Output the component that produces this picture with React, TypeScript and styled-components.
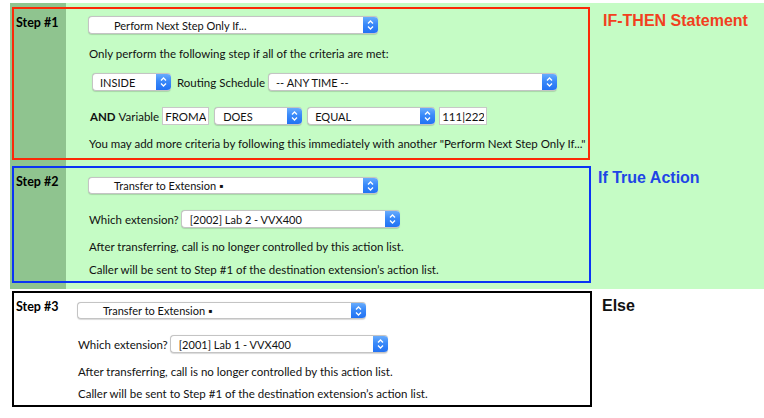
import React from "react";
import styled, { createGlobalStyle } from "styled-components";

const GlobalStyle = createGlobalStyle`
  html, body { margin: 0; padding: 0; background: #ffffff; }
  body { font-family: Lato, "Open Sans", "Noto Sans", sans-serif; color: #111; }
`;

const Page = styled.div`
  width: 764px;
  height: 418px;
  overflow: hidden;
  padding-top: 3px;
  box-sizing: border-box;
`;

const GreenSection = styled.div`
  margin-left: 10px;
  padding: 4px 0 6px 2px;
  background: linear-gradient(to right, #8fc48f 0, #8fc48f 56px, #c5fcc5 56px);
`;

const WhiteSection = styled.div`
  margin-left: 10px;
  padding: 2px 0 0 2px;
`;

const Row = styled.div<{ $mt?: number }>`
  display: flex;
  align-items: flex-start;
  margin-top: ${(p) => p.$mt ?? 0}px;
`;

const StepBox = styled.div<{ $color: string; $w: number }>`
  box-sizing: border-box;
  width: ${(p) => p.$w}px;
  border: 2px solid ${(p) => p.$color};
  display: flex;
  align-items: flex-start;
`;

const StepLabel = styled.div<{ $w: number }>`
  box-sizing: border-box;
  width: ${(p) => p.$w}px;
  flex: none;
  padding: 6px 0 0 2px;
  font-size: 12.5px;
  line-height: 16px;
  font-weight: 700;
  color: #000;
`;

const StepBody = styled.div<{ $pt: number; $pb: number }>`
  flex: 1;
  display: flex;
  flex-direction: column;
  align-items: flex-start;
  padding: ${(p) => p.$pt}px 0 ${(p) => p.$pb}px 0;
`;

const SideLabel = styled.div<{ $color: string; $ml: number; $mt: number }>`
  font-family: "Liberation Sans", Arial, sans-serif;
  font-weight: 700;
  font-size: 16px;
  line-height: 18px;
  color: ${(p) => p.$color};
  margin-left: ${(p) => p.$ml}px;
  margin-top: ${(p) => p.$mt}px;
  white-space: nowrap;
`;

const Text = styled.p<{ $mt: number }>`
  margin: ${(p) => p.$mt}px 0 0 1px;
  font-size: 11.5px;
  line-height: 16px;
  white-space: nowrap;
  color: #111;
`;

const Line = styled.div<{ $mt: number; $pl?: number; $h: number }>`
  display: flex;
  align-items: center;
  height: ${(p) => p.$h}px;
  margin-top: ${(p) => p.$mt}px;
  padding-left: ${(p) => p.$pl ?? 0}px;
  font-size: 11.5px;
  white-space: nowrap;
`;

const Word = styled.span<{ $ml?: number; $bold?: boolean }>`
  margin-left: ${(p) => p.$ml ?? 0}px;
  font-weight: ${(p) => (p.$bold ? 700 : 400)};
  color: #111;
`;

const SelectShell = styled.div<{ $w: number; $h: number; $ml?: number }>`
  box-sizing: border-box;
  flex: none;
  width: ${(p) => p.$w}px;
  height: ${(p) => p.$h}px;
  margin-left: ${(p) => p.$ml ?? 0}px;
  display: flex;
  align-items: stretch;
  background: #ffffff;
  border: 1px solid #c4c4c4;
  border-right: none;
  border-radius: 4px;
  box-shadow: 0 0.5px 1px rgba(0, 0, 0, 0.15);
  overflow: hidden;
`;

const SelectText = styled.span<{ $indent: number }>`
  flex: 1;
  display: flex;
  align-items: center;
  padding-left: ${(p) => p.$indent}px;
  font-size: 11px;
  color: #111;
  white-space: nowrap;
  overflow: hidden;
`;

const ArrowButton = styled.span`
  flex: none;
  width: 15px;
  margin: -1px 0;
  display: flex;
  align-items: center;
  justify-content: center;
  background: linear-gradient(to bottom, #6fb1fd 0%, #3a8af9 45%, #1f6ff3 100%);
  border-radius: 0 4px 4px 0;
`;

const FieldInput = styled.input<{ $w: number; $ml?: number }>`
  box-sizing: border-box;
  flex: none;
  width: ${(p) => p.$w}px;
  height: 18px;
  margin: 0 0 0 ${(p) => p.$ml ?? 0}px;
  padding: 0 2px;
  border: 1px solid #c8c8c8;
  background: #ffffff;
  font-family: Lato, "Open Sans", sans-serif;
  font-size: 11.5px;
  color: #111;
  outline: none;
`;

const Chevrons = () => (
  <svg width="9" height="12" viewBox="0 0 9 12" fill="none">
    <polyline points="2,4.5 4.5,2 7,4.5" stroke="#ffffff" strokeWidth="1.3" />
    <polyline points="2,7.5 4.5,10 7,7.5" stroke="#ffffff" strokeWidth="1.3" />
  </svg>
);

type SelectProps = {
  w: number;
  h?: number;
  indent?: number;
  ml?: number;
  children: React.ReactNode;
};

const Select = ({ w, h = 18, indent = 7, ml, children }: SelectProps) => (
  <SelectShell $w={w} $h={h} $ml={ml}>
    <SelectText $indent={indent}>{children}</SelectText>
    <ArrowButton>
      <Chevrons />
    </ArrowButton>
  </SelectShell>
);

type TransferProps = {
  selW: number;
  extW: number;
  ext: string;
  textGap: number;
};

const TransferBody = ({ selW, extW, ext, textGap }: TransferProps) => (
  <StepBody $pt={9} $pb={3}>
    <Select w={selW} h={17} indent={25}>
      Transfer to Extension ▪
    </Select>
    <Line $mt={16} $h={18}>
      <Word $ml={1}>Which extension?</Word>
      <Select w={extW} indent={8} ml={2}>
        {ext}
      </Select>
    </Line>
    <Text $mt={11}>After transferring, call is no longer controlled by this action list.</Text>
    <Text $mt={textGap}>Caller will be sent to Step #1 of the destination extension’s action list.</Text>
  </StepBody>
);

export default function App() {
  return (
    <Page>
      <GlobalStyle />
      <GreenSection>
        <Row>
          <StepBox $color="#fb2a08" $w={578}>
            <StepLabel $w={74}>Step #1</StepLabel>
            <StepBody $pt={7} $pb={6}>
              <Select w={290} indent={25}>
                Perform Next Step Only If...
              </Select>
              <Text $mt={12}>Only perform the following step if all of the criteria are met:</Text>
              <Line $mt={11} $h={18} $pl={4}>
                <Select w={79}>INSIDE</Select>
                <Word $ml={6}>Routing Schedule</Word>
                <Select w={289} ml={3}>
                  -- ANY TIME --
                </Select>
              </Line>
              <Line $mt={16} $h={18} $pl={2}>
                <Word $bold>AND</Word>
                <Word $ml={3}>Variable</Word>
                <FieldInput $w={47} $ml={3} readOnly value="FROMAFTERHOURS" />
                <Select w={88} indent={8} ml={5}>
                  DOES
                </Select>
                <Select w={128} ml={5}>
                  EQUAL
                </Select>
                <FieldInput $w={48} $ml={4} readOnly value="111|222" />
              </Line>
              <Text $mt={11}>
                You may add more criteria by following this immediately with another "Perform Next Step Only If..."
              </Text>
            </StepBody>
          </StepBox>
          <SideLabel $color="#f2401e" $ml={13} $mt={5}>
            IF-THEN Statement
          </SideLabel>
        </Row>
        <Row $mt={6}>
          <StepBox $color="#0a34f5" $w={579}>
            <StepLabel $w={74}>Step #2</StepLabel>
            <TransferBody selW={290} extW={219} ext="[2002] Lab 2 - VVX400" textGap={7} />
          </StepBox>
          <SideLabel $color="#1f45e6" $ml={7} $mt={3}>
            If True Action
          </SideLabel>
        </Row>
      </GreenSection>
      <WhiteSection>
        <Row>
          <StepBox $color="#000000" $w={580}>
            <StepLabel $w={63}>Step #3</StepLabel>
            <TransferBody selW={289} extW={218} ext="[2001] Lab 1 - VVX400" textGap={6} />
          </StepBox>
          <SideLabel $color="#111111" $ml={10} $mt={6}>
            Else
          </SideLabel>
        </Row>
      </WhiteSection>
    </Page>
  );
}
